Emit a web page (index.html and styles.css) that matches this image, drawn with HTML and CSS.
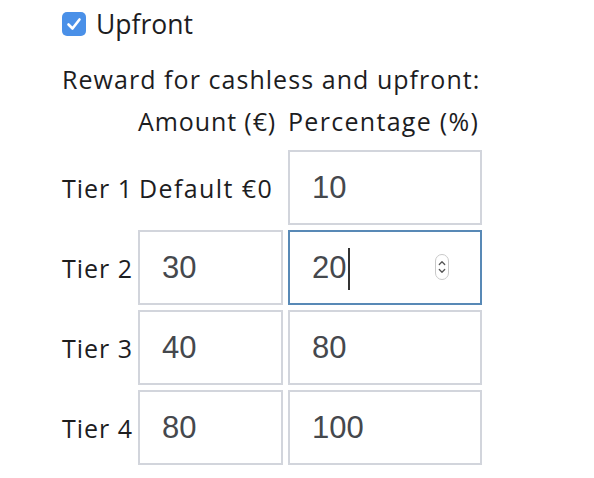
FILE: index.html
```html
<!DOCTYPE html>
<html lang="en">
  <head>
    <meta charset="UTF-8" />
    <meta name="viewport" content="width=device-width, initial-scale=1.0" />
    <title>Rewards</title>
    <link rel="stylesheet" href="styles.css">
  </head>
  <body>
    <div class="reward-settings">
      <label class="check-row">
        <span class="check-box checked">
          <svg viewBox="0 0 24 24" width="24" height="24">
            <path d="M6.5 12.5 L10.5 16.5 L17.5 7.5" fill="none" stroke="#fff" stroke-width="2.6" stroke-linecap="round" stroke-linejoin="round" />
          </svg>
        </span>
        <span class="check-label upfront">Upfront</span>
      </label>

      <div class="reward-title">Reward for cashless and upfront:</div>

      <div class="tiers">
        <div></div>
        <div class="tier-head">Amount (€)</div>
        <div class="tier-head">Percentage (%)</div>

        <div class="tier-name">Tier 1</div>
        <div class="tier-default">Default €0</div>
        <input class="tier-input" type="text" value="10" />

        <div class="tier-name">Tier 2</div>
        <input class="tier-input" type="text" value="30" />
        <div class="focus-wrap">
          <input class="tier-input focused" type="text" value="20" />
          <span class="caret"></span>
          <span class="spinner">
            <svg viewBox="0 0 14 26" width="14" height="26">
              <rect x="0.5" y="0.5" width="13" height="25" rx="6.5" fill="#fff" stroke="#c8c8c8" />
              <path d="M4.3 10.5 L7 7.8 L9.7 10.5" fill="none" stroke="#555" stroke-width="1.3" stroke-linecap="round" stroke-linejoin="round" />
              <path d="M4.3 15.5 L7 18.2 L9.7 15.5" fill="none" stroke="#555" stroke-width="1.3" stroke-linecap="round" stroke-linejoin="round" />
            </svg>
          </span>
        </div>

        <div class="tier-name">Tier 3</div>
        <input class="tier-input" type="text" value="40" />
        <input class="tier-input" type="text" value="80" />

        <div class="tier-name">Tier 4</div>
        <input class="tier-input" type="text" value="80" />
        <input class="tier-input" type="text" value="100" />
      </div>

      <label class="check-row refund-row">
        <span class="check-box"></span>
        <span class="check-label">Refundable</span>
      </label>
    </div>
  </body>
</html>
```

FILE: styles.css
```css
body {
  margin: 0;
  background: #fff;
  font-family: "Open Sans", "Lato", sans-serif;
  color: #1d1d1f;
}

.reward-settings {
  padding-left: 62px;
}

.check-row {
  display: flex;
  align-items: center;
  gap: 10px;
  height: 48px;
}

.check-box {
  width: 24px;
  height: 24px;
  box-sizing: border-box;
  border-radius: 5px;
  border: 1px solid #b9b9b9;
  background: #fff;
  display: flex;
}

.check-box.checked {
  border: none;
  background: #4a90e8;
}

.check-label {
  font-size: 25px;
  letter-spacing: 1px;
}

.check-label.upfront {
  font-size: 26.5px;
  letter-spacing: 0;
}

.reward-title {
  margin-top: 15px;
  font-size: 25px;
  line-height: 32px;
  letter-spacing: 1.05px;
}

.tiers {
  margin-top: 10px;
  display: grid;
  grid-template-columns: 71px 145px 194px;
  grid-template-rows: 40px repeat(4, 75px);
  column-gap: 5px;
  row-gap: 5px;
  align-items: center;
}

.tier-head {
  align-self: start;
  font-size: 25px;
  line-height: 32px;
  letter-spacing: 1.3px;
  white-space: nowrap;
}

.tiers .tier-head:nth-child(2) {
  letter-spacing: 0.9px;
}

.tier-name,
.tier-default {
  font-size: 25px;
  letter-spacing: 1px;
  white-space: nowrap;
}

.tier-default {
  margin-left: 1px;
  letter-spacing: 1.4px;
}

.tier-input {
  box-sizing: border-box;
  width: 100%;
  height: 75px;
  margin: 0;
  padding: 0 22px;
  border: 2px solid #d2d5dc;
  border-radius: 0;
  outline: none;
  background: #fff;
  font-family: "Liberation Sans", Arial, sans-serif;
  font-size: 31px;
  color: #45484d;
}

.tier-input.focused {
  border-color: #5889b6;
}

.focus-wrap {
  position: relative;
  height: 75px;
}

.caret {
  position: absolute;
  left: 60px;
  top: 18px;
  width: 2px;
  height: 42px;
  background: #333;
}

.spinner {
  position: absolute;
  left: 147px;
  top: 24px;
  display: flex;
}

.refund-row {
  margin-top: 2px;
}
```
